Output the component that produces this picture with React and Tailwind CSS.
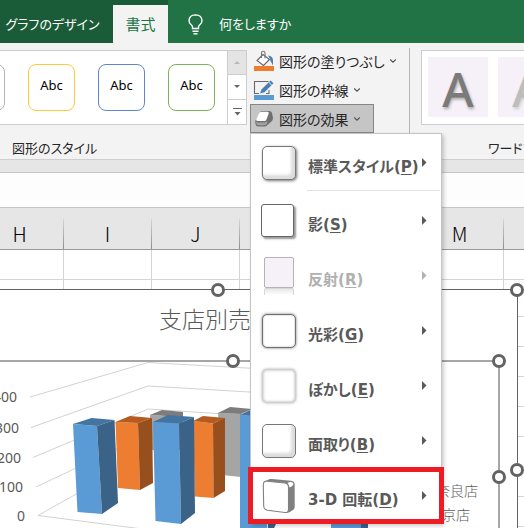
const JP = "font-['Noto_Sans_CJK_JP','Noto_Sans',sans-serif] [font-feature-settings:'palt']"

const shapeStyles = [
  { id: 'gray', border: 'border-[#b5b5b5]', text: '' },
  { id: 'gold', border: 'border-[#ffc93c]', text: 'Abc' },
  { id: 'blue', border: 'border-[#5b87cf]', text: 'Abc' },
  { id: 'green', border: 'border-[#7ab35a]', text: 'Abc' },
]

const menuItems = [
  { label: '標準スタイル', accel: 'P', icon: 'preset', separator: true },
  { label: '影', accel: 'S', icon: 'shadow' },
  { label: '反射', accel: 'R', icon: 'reflection', disabled: true },
  { label: '光彩', accel: 'G', icon: 'glow' },
  { label: 'ぼかし', accel: 'E', icon: 'soft' },
  { label: '面取り', accel: 'B', icon: 'bevel' },
  { label: '3-D 回転', accel: 'D', icon: 'rotate', highlight: true },
]

const columns = ['H', 'I', 'J', 'K', 'L', 'M', '']
const rows = [30, 37, 30, 30, 30, 30, 30, 30, 30, 30, 30, 30]

function Chevron() {
  return (
    <svg width="8" height="6" viewBox="0 0 8 6" fill="none" stroke="#555" strokeWidth="1.1">
      <path d="M1.2 1.5 4 4.2 6.8 1.5" />
    </svg>
  )
}

function FillIcon() {
  return (
    <svg width="22" height="22" viewBox="0 0 22 22" fill="none">
      <path d="M10 4.500 16.500 9.500 10.500 15.500 4 10.500Z" fill="#fff" stroke="#666" strokeWidth="1.100" />
      <path d="M8.500 8V3Q8.500 1.200 10.200 1.200T12 3V8.500" stroke="#777" strokeWidth="1.100" />
      <path d="M15 5.500Q20 6 20 10.500V15.500L17.500 11 16.800 8.500Z" fill="#4a7fb5" />
      <rect x="1" y="16" width="20" height="5" fill="#ed7d31" />
    </svg>
  )
}

function OutlineIcon() {
  return (
    <svg width="22" height="22" viewBox="0 0 22 22" fill="none">
      <path d="M15.500 2.500H1.500V14.500H6M13 14.500H16V11" stroke="#6a6a6a" strokeWidth="1.100" />
      <path d="M7 14.500 8.500 10.500 17.500 1.500 20.500 4.200 11.500 13.200Z" fill="#4a7fb5" />
      <path d="M15.700 3.200 18.800 6.200" stroke="#f3f3f3" />
      <rect x="1" y="16" width="20" height="5" fill="#5b9bd5" />
    </svg>
  )
}

function EffectIcon() {
  return (
    <svg width="22" height="22" viewBox="0 0 22 22">
      <path d="M8 3H16Q18.500 3 19 5L20 10Q20 12 18.500 13.500L14.500 17Q13 18.500 11 18.500H5Q3 18.500 2.500 16L2.200 13Z" fill="#707070" />
      <path d="M8.500 3.800H14.500Q16.300 3.800 15.700 5.500L13.500 11.500Q13 13 11.300 13H4.500Q2.600 13 3.200 11.300L6 5.500Q6.800 3.800 8.500 3.800Z" fill="#fff" />
      <path d="M3 14Q4 14.400 5 14.400H11.500Q13.300 14.400 14 13L14.500 15Q13 17.200 11 17.200H5.500Q3.500 17.200 3 14Z" fill="#a2a2a2" />
    </svg>
  )
}

function MenuIcon({ type }) {
  const base = 'block size-[34px] rounded-[5px] border bg-white'
  if (type === 'preset') {
    return <span className={`${base} border-[#777] shadow-[inset_-4px_-4px_3px_#dcdcdc,1px_1px_3px_#777]`} />
  }
  if (type === 'shadow') {
    return <span className="mr-0.5 block size-[33px] rounded-[3px] border border-[#666] bg-white shadow-[2px_2px_2px_#999]" />
  }
  if (type === 'reflection') {
    return (
      <span className="block w-[30px]">
        <span className="block h-[31px] rounded-[2px] border border-[#b4b4b4] bg-[#f6f1f8]" />
        <span className="block h-[7px] rounded-t-[2px] border-x border-t border-[#d8d8d8] bg-linear-to-b from-[#e8e8e8] to-white" />
      </span>
    )
  }
  if (type === 'glow') {
    return <span className={`${base} border-[#707070] shadow-[0_0_3px_#777,inset_0_0_2px_#aaa]`} />
  }
  if (type === 'soft') {
    return <span className={`${base} border-[#cfcfcf] shadow-[0_0_3px_#aaa,inset_0_0_3px_#aaa]`} />
  }
  if (type === 'bevel') {
    return <span className={`${base} border-[#777] shadow-[inset_-4px_-4px_3px_#dcdcdc]`} />
  }
  return (
    <svg width="34" height="36" viewBox="0 0 34 36" fill="none">
      <path d="M3 3.500 7 1.300Q8 .9 10 1.100L29 2.800Q32.700 3.300 32.700 6.500V29Q32.700 31 31 32L27 34.500H23V5Z" fill="#808080" />
      <path d="M5 3.200 23 5Q26.500 5.500 26.500 9.500V31Q26.500 34.800 23 34.500L5.500 32.300Q1.800 31.500 1.700 28L1.300 7Q1.300 2.800 5 3.200Z" fill="#fff" stroke="#808080" strokeWidth="1.100" />
      <path d="M25.500 5Q28 3.500 30.500 4.500 32.500 6.500 29.500 8.500L27.500 9.500Q27.300 6.500 25.500 5Z" fill="#fff" />
    </svg>
  )
}

function EffectsMenu() {
  return (
    <div
      role="menu"
      className="absolute top-full left-0 z-20 w-48 border border-[#c4c4c4] bg-white pt-px shadow-[2px_2px_4px_rgba(0,0,0,0.2)]"
    >
      {menuItems.map((item) => (
        <div key={item.accel} className="relative">
          <button
            type="button"
            role="menuitem"
            disabled={item.disabled}
            className={`flex h-[55px] w-full items-center pr-3.5 text-left font-['DejaVu_Sans','Noto_Sans_CJK_JP',sans-serif] text-[15px] font-bold ${item.disabled ? 'text-[#b0b0b0]' : 'text-[#595959]'}`}
          >
            <span className="flex w-[57px] shrink-0 justify-center pr-0.5">
              <MenuIcon type={item.icon} />
            </span>
            <span className="grow pt-2.5 whitespace-nowrap">
              {item.label}(<span className="underline underline-offset-2">{item.accel}</span>)
            </span>
            <svg width="5" height="9" viewBox="0 0 5 9" fill="currentColor" className="shrink-0">
              <path d="M0 0 4.500 4.500 0 9Z" />
            </svg>
          </button>
          {item.separator && <hr className="mr-px mb-0.5 ml-14 border-[#e0e0e0]" />}
          {item.highlight && (
            <div className="pointer-events-none absolute -inset-x-[3px] -inset-y-px border-5 border-[#ed1c24]" />
          )}
        </div>
      ))}
    </div>
  )
}

function Tabs() {
  return (
    <header className="flex h-[43px] shrink-0 items-end bg-[#217346] text-[13px] text-white">
      <nav className="flex h-full items-end bg-[#1b5c38]">
        <button type="button" className="h-[38px] w-[113px] pr-2 whitespace-nowrap">
          グラフのデザイン
        </button>
        <button type="button" className="h-[38px] w-[55px] bg-[#f3f3f3] text-[15px] text-[#217346]">
          書式
        </button>
      </nav>
      <button type="button" className="flex h-[38px] items-center gap-4 pl-5">
        <svg width="15" height="21" viewBox="0 0 15 21" fill="none" stroke="#fff" strokeWidth="1.400">
          <path d="M4.500 14.500V12.800Q4.500 12 3.400 11 1 9.200 1 6.800 1.200 1 7.500 .9 13.800 1 14 6.800 14 9.200 11.600 11 10.500 12 10.500 12.800V14.500Z" />
          <path d="M4.500 17.300H10.500M5.500 19.800H9.500" />
        </svg>
        何をしますか
      </button>
    </header>
  )
}

function Ribbon() {
  return (
    <div className="relative z-10 flex h-[117px] shrink-0 border-b border-[#cfcfcf] bg-[#f3f3f3] text-[#262626]">
      {/* shape styles gallery */}
      <section className="flex w-[247px] shrink-0 flex-col pt-[7px]">
        <div className="flex h-[75px] border-y border-[#cdcdcd] bg-white">
          <div className="flex grow items-center justify-end gap-[23px] overflow-hidden pr-3">
            {shapeStyles.map((s) => (
              <button
                key={s.id}
                type="button"
                aria-label={s.id}
                className={`size-[47px] shrink-0 rounded-lg border pb-1 font-['Noto_Sans',sans-serif] text-[13px] text-black ${s.border}`}
              >
                {s.text}
              </button>
            ))}
          </div>
          <div className="grid w-5 shrink-0 grid-rows-3 divide-y divide-[#cdcdcd] border-x border-[#cdcdcd]">
            <button type="button" aria-label="上へ" className="flex items-center justify-center bg-[#e4e4e4]">
              <svg width="6" height="3" fill="#b8b8b8"><path d="M0 3 3 0 6 3Z" /></svg>
            </button>
            <button type="button" aria-label="下へ" className="flex items-center justify-center">
              <svg width="6" height="3" fill="#666"><path d="M0 0 3 3 6 0Z" /></svg>
            </button>
            <button type="button" aria-label="その他" className="flex items-center justify-center">
              <svg width="9" height="8" fill="#666"><path d="M0 0H9V1H0ZM1.500 4 4.500 7.500 7.500 4Z" /></svg>
            </button>
          </div>
        </div>
        <h2 className="flex grow items-center pt-3 pl-3 text-[13px]">図形のスタイル</h2>
      </section>

      {/* fill / outline / effects */}
      <div className="ml-[3px] flex w-[159px] shrink-0 flex-col items-start pt-[3px] text-sm whitespace-nowrap">
        <button type="button" className="flex h-[29px] items-center gap-1 pl-[3px]">
          <FillIcon />
          図形の塗りつぶし
          <Chevron />
        </button>
        <button type="button" className="flex h-[29px] items-center gap-1 pl-[3px]">
          <OutlineIcon />
          図形の枠線
          <Chevron />
        </button>
        <div className="relative">
          <button
            type="button"
            aria-haspopup="menu"
            aria-expanded="true"
            className="flex h-[29px] w-[124px] items-center gap-1 border border-[#868686] bg-[#c5c5c5] pl-0.5"
          >
            <EffectIcon />
            図形の効果
            <Chevron />
          </button>
          <EffectsMenu />
        </div>
      </div>

      {/* word art */}
      <div className="my-[5px] w-px shrink-0 bg-[#b5b5b5]" />
      <section className="ml-[11px] flex min-w-0 grow flex-col overflow-hidden pt-[7px]">
        <div className="flex h-[75px] gap-2.5 border-y border-l border-[#cdcdcd] bg-white py-1.5 pl-1.5">
          <button type="button" className="size-[60px] shrink-0 bg-[#f6f1f8] pt-1 font-['Noto_Sans',sans-serif] text-5xl leading-none font-medium text-[#7a7a7a] [text-shadow:1px_2px_3px_#aaa]">
            A
          </button>
          <button type="button" className="size-[60px] shrink-0 bg-[#f6f1f8] pt-1 font-['Noto_Sans',sans-serif] text-5xl leading-none font-medium text-[#bdbdbd] [text-shadow:1px_2px_3px_#ccc]">
            A
          </button>
        </div>
        <h2 className="flex grow items-center pt-3 pl-[67px] text-[13px] whitespace-nowrap">ワードアート</h2>
      </section>
    </div>
  )
}

function Handle({ className }) {
  return <span className={`absolute size-3.5 rounded-full border-3 border-[#636363] bg-white ${className}`} />
}

function BarChart() {
  return (
    <svg
      className="absolute top-0 left-0"
      width="498"
      height="180"
      viewBox="0 362 498 180"
      role="img"
      aria-label="支店別売上"
    >
      <g fill="none" stroke="#d2d2d2">
        <path d="M30 397 148 362.500 300 371" />
        <path d="M31 427.500 148 386 300 395" />
        <path d="M33 457.500 148 409 300 419" />
        <path d="M36 487 148 434" />
        <path d="M78 493 38 515.500 150 530" />
      </g>
      <g fontSize="14" fill="#595959" textAnchor="end" className="font-['Noto_Sans',sans-serif]">
        <text x="17" y="402">400</text>
        <text x="19" y="433">300</text>
        <text x="21" y="463">200</text>
        <text x="23" y="492">100</text>
        <text x="25" y="521">0</text>
      </g>
      {/* back row */}
      <path d="M150 415 182 417V450H150Z" fill="#a5a5a5" />
      <path d="M150 415 162 410 183 412V417Z" fill="#7c7c7c" />
      <path d="M218 413 241 414V477L222 475Z" fill="#a5a5a5" />
      <path d="M218 413 230 407 252 409 241 414Z" fill="#7c7c7c" />
      {/* middle row */}
      <path d="M115.500 422 138 423 140 490 118 488Z" fill="#ed7d31" />
      <path d="M115.500 422 130 416 152 418 138 423Z" fill="#b55b1f" />
      <path d="M138 423 152 418 153 483 140 490Z" fill="#984f1e" />
      <path d="M193 421 213 423.500 213.500 498 195 496.500Z" fill="#ed7d31" />
      <path d="M193 421 203 416 225 418 213 423.500Z" fill="#b55b1f" />
      <path d="M213 423.500 225 418V491L213.500 498Z" fill="#984f1e" />
      {/* front row */}
      <path d="M73 424 97 426 102 514 77.500 512Z" fill="#5b9bd5" />
      <path d="M73 424 91.500 418 114.500 420 97 426Z" fill="#4475a2" />
      <path d="M97 426 114.500 420 118 503 102 514Z" fill="#3a6387" />
      <path d="M153 422 179 423.500 181 524 155.500 521Z" fill="#5b9bd5" />
      <path d="M153 422 168 415 194 417 179 423.500Z" fill="#4475a2" />
      <path d="M179 423.500 194 417 195 513 181 524Z" fill="#3a6387" />
      <path d="M240 415 267 417V541H240Z" fill="#5b9bd5" />
      <path d="M240 415 252 409 276 411 267 417Z" fill="#4475a2" />
      <path d="M267 417 276 411V524L268 541Z" fill="#3a6387" />
      <path d="M331 425H361V541H331Z" fill="#5b9bd5" />
      <path d="M361 425 368 419V541H361Z" fill="#3a6387" />
    </svg>
  )
}

function Chart() {
  return (
    <div className="absolute top-[39px] left-0 h-96 w-[518px] border-t border-r border-[#636363] bg-white">
      <h3 className="ml-[159px] pt-2.5 text-[23px] leading-9 font-light text-[#595959]">支店別売上</h3>
      <div className="absolute inset-y-0 top-[70px] left-0 w-[500px] border-t-2 border-r-2 border-[#a6a6a6]">
        <BarChart />
        <ul className="absolute top-[116px] right-5 text-right text-sm leading-6 font-light text-[#595959]">
          <li>奈良店</li>
          <li className="pr-2">東京店</li>
        </ul>
        <Handle className="-top-2 left-[226px]" />
        <Handle className="-top-2 -right-2" />
        <Handle className="top-[108px] -right-2" />
      </div>
      <Handle className="-top-[7px] left-[211px]" />
      <Handle className="-top-[7px] -right-[7px]" />
      <Handle className="top-[173px] -right-[7px]" />
    </div>
  )
}

function Sheet() {
  return (
    <main className="flex grow flex-col">
      <div className="h-3 bg-[#e6e6e6]" />
      <div className="h-9 border-y border-[#c6c6c6] bg-[#fdfdfd]" />
      <div className="flex h-[42px] shrink-0 items-end overflow-hidden border-b border-[#999] bg-[#e6e6e6]">
        <div className="-ml-6 flex">
          {columns.map((c) => (
            <div key={c} className="flex h-[30px] w-[88px] shrink-0">
              <span className="grow text-center text-xl leading-[30px] font-light text-black">{c}</span>
              <span className="w-px bg-linear-to-b from-[#d4d4d4] to-[#909090]" />
            </div>
          ))}
        </div>
      </div>
      <div className="relative grow overflow-hidden bg-white">
        <div className="-ml-6 flex">
          {columns.map((c) => (
            <div key={c} className="w-[88px] shrink-0 border-r border-[#d4d4d4]">
              {rows.map((h, i) => (
                <div key={i} className="border-b border-[#d4d4d4]" style={{ height: h }} />
              ))}
            </div>
          ))}
        </div>
        <Chart />
      </div>
    </main>
  )
}

export default function App() {
  return (
    <div className={`flex h-screen flex-col overflow-hidden ${JP}`}>
      <Tabs />
      <Ribbon />
      <Sheet />
    </div>
  )
}
